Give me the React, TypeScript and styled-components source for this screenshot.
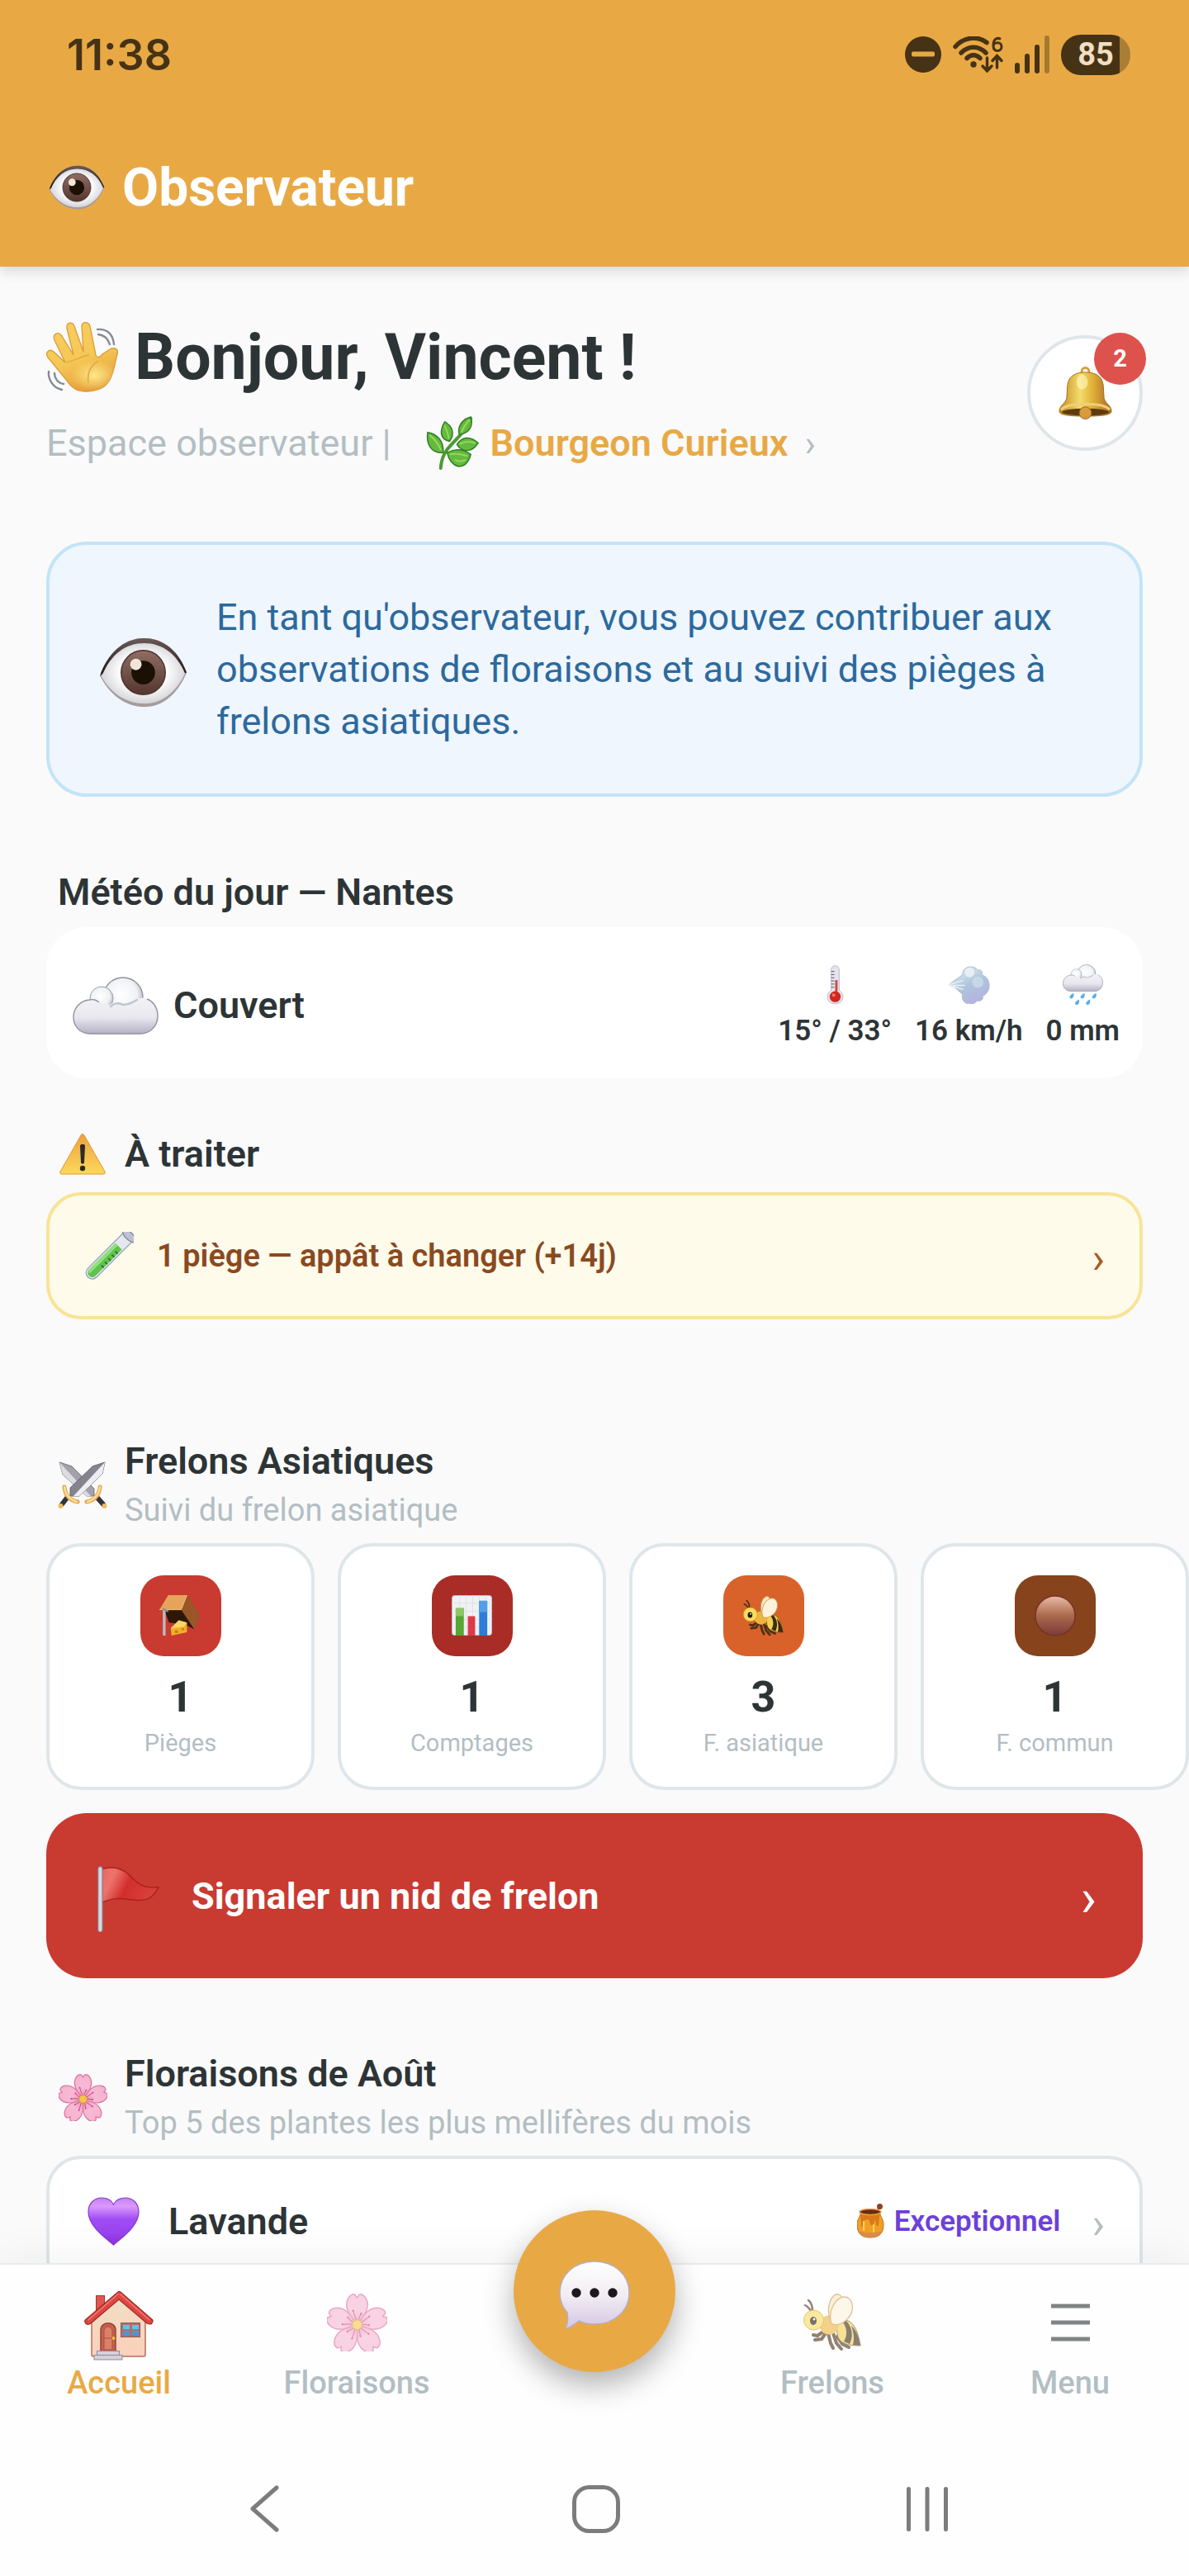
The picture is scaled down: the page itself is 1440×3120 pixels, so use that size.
import type { ReactNode } from 'react';
import styled, { ThemeProvider, createGlobalStyle } from 'styled-components';

const theme = {
  colors: {
    brand: '#e8a945',
    bg: '#fafafa',
    surface: '#ffffff',
    text: '#2d3436',
    muted: '#b2bec3',
    border: '#dfe6e9',
    status: '#463214',
    infoBg: '#eff6fe',
    infoBorder: '#c3e4f7',
    infoText: '#2c699d',
    warnBg: '#fefbeb',
    warnBorder: '#f7e496',
    warnText: '#8a4a1f',
    warnArrow: '#a95c26',
    danger: '#c93a31',
    badge: '#de524d',
    top: '#6d40d9',
    system: '#7c7c7c',
  },
  font: {
    xs: '29px',
    sm: '35px',
    md: '38px',
    base: '45px',
    stat: '52px',
    title: '64px',
    hero: '77px',
  },
  radius: { md: '28px', lg: '42px', xl: '49px' },
};

type AppTheme = typeof theme;
type Size = keyof AppTheme['font'];
type Color = keyof AppTheme['colors'];

declare module 'styled-components' {
  export interface DefaultTheme extends AppTheme {}
}

const GlobalStyle = createGlobalStyle`
  *, *::before, *::after {
    box-sizing: border-box;
  }

  body {
    margin: 0;
    background: ${({ theme }) => theme.colors.bg};
    color: ${({ theme }) => theme.colors.text};
    font-family: Roboto, sans-serif;
  }

  h1, h2, h3, p {
    margin: 0;
  }

  a {
    color: inherit;
    text-decoration: none;
  }

  button {
    border: none;
    background: none;
    padding: 0;
    font: inherit;
    color: inherit;
    text-align: left;
    cursor: pointer;
  }
`;

/* ---------- drawings ---------- */

type ArtProps = { width: number };

function Eye({ width }: ArtProps) {
  return (
    <svg width={width} viewBox="0 0 108 86" aria-hidden="true">
      <defs>
        <radialGradient id="eye-white" cx="50%" cy="48%" r="55%">
          <stop offset="0.5" stopColor="#ffffff" />
          <stop offset="1" stopColor="#cfcdd3" />
        </radialGradient>
        <linearGradient id="eye-iris" x1="0" y1="0" x2="0" y2="1">
          <stop offset="0" stopColor="#8f6d65" />
          <stop offset="1" stopColor="#54362f" />
        </linearGradient>
        <linearGradient id="eye-lid" x1="0" y1="0" x2="0" y2="1">
          <stop offset="0" stopColor="#6a5b59" />
          <stop offset="1" stopColor="#1d1210" />
        </linearGradient>
      </defs>
      <path d="M1 47C10 20 30 1 55 1s43 17 52 42c-8 20-25 42-51 42S12 68 1 47z" fill="#a39d9e" />
      <path d="M1 47C10 20 30 1 55 1s43 17 52 42l-4 2H3z" fill="url(#eye-lid)" />
      <path d="M3 48C14 20 33 7 55 7s40 13 50 37c-9 20-26 37-49 37S15 69 3 48z" fill="url(#eye-white)" />
      <circle cx="54" cy="43" r="27" fill="url(#eye-iris)" />
      <circle cx="54" cy="43" r="27" fill="none" stroke="#4d322c" strokeWidth="1.5" />
      <circle cx="54" cy="43" r="14.5" fill="#1b1005" />
      <circle cx="45" cy="33" r="7" fill="#efe5d8" />
    </svg>
  );
}

function Wave({ width }: ArtProps) {
  return (
    <svg width={width} viewBox="0 0 88 86" aria-hidden="true">
      <defs>
        <linearGradient id="wave-skin" x1="0.3" y1="0" x2="0.7" y2="1">
          <stop offset="0" stopColor="#f8cd60" />
          <stop offset="0.5" stopColor="#f5c856" />
          <stop offset="1" stopColor="#e59a35" />
        </linearGradient>
        <radialGradient id="wave-palm" cx="62%" cy="60%" r="38%">
          <stop offset="0" stopColor="#fde88a" />
          <stop offset="1" stopColor="#fde88a" stopOpacity="0" />
        </radialGradient>
      </defs>
      <path
        d="M46 84c-9 0-16-5-21-13L2 43c-4-7 2-11 7-7l14 13L10 22c-3-8 5-11 9-5l14 23L25 8c-1-8 7-9 9-3l11 31L43 6c0-7 8-7 10-1l7 35c2 4 5 3 8-1l9-6c6-3 11 0 9 6l-4 17c-3 12-7 21-17 25-6 2-12 4-19 3z"
        fill="url(#wave-skin)"
        stroke="#dc9a3a"
        strokeWidth="1.3"
      />
      <path
        d="M46 84c-9 0-16-5-21-13L12 55l20-16 28 2 6 3 20-9-4 21c-3 12-7 21-17 25-6 2-12 4-19 3z"
        fill="url(#wave-palm)"
      />
      <path d="M24 49c10-2 20-8 28-9M51 74c-2-14 4-22 12-27" fill="none" stroke="#e6ac46" strokeWidth="1.8" />
      <g fill="none" stroke="#858b93" strokeWidth="2.4" strokeLinecap="round">
        <path d="M62 9c12-1 19 6 20 18M63 15c8 1 12 6 14 12M3 60c-1 9 5 20 16 22M10 62c0 6 4 12 11 13" />
      </g>
    </svg>
  );
}

function Herb({ width }: ArtProps) {
  return (
    <svg width={width} viewBox="0 0 66 66" aria-hidden="true">
      <path d="M18 64c1-14 6-22 14-30S48 18 55 3" fill="none" stroke="#4b9a32" strokeWidth="4" strokeLinecap="round" />
      <g fill="#64ba3e" stroke="#2f7d24" strokeWidth="1.5">
        <path d="M21 45C6 46 0 34 2 20c12 2 20 11 19 25z" />
        <path d="M29 31c-13-3-12-14-6-24 9 5 13 14 6 24z" />
        <path d="M41 23c-3-10 3-19 14-22 3 10 0 19-14 22z" />
        <path d="M38 35c6-10 16-11 26-2-7 11-19 13-26 2z" />
        <path d="M26 45c9-5 19-5 29 2-3 11-9 15-15 15-8-2-12-8-14-17z" />
      </g>
      <g fill="none" stroke="#9ad660" strokeWidth="2" strokeLinecap="round">
        <path d="M18 41C15 34 10 28 5 24M28 27c-1-6-3-11-5-15M44 19c2-5 5-10 9-14M42 34c6-3 12-3 18-1M30 47c7-1 14 0 20 2M36 54c4 2 8 2 12 0" />
      </g>
    </svg>
  );
}

function Bell({ width }: ArtProps) {
  return (
    <svg width={width} viewBox="0 0 66 65" aria-hidden="true">
      <defs>
        <linearGradient id="bell-body" x1="0" y1="0" x2="1" y2="0">
          <stop offset="0" stopColor="#c48a22" />
          <stop offset="0.4" stopColor="#f3dd6b" />
          <stop offset="0.65" stopColor="#e0ae36" />
          <stop offset="1" stopColor="#a8662a" />
        </linearGradient>
      </defs>
      <circle cx="33" cy="6" r="4.5" fill="none" stroke="#d0a13c" strokeWidth="3" />
      <path
        d="M10 39l1-16C12 11 22 7 33 7s21 4 22 16l1 16c2 7 9 9 9 16 0 5-14 6-32 6S1 60 1 55c0-7 7-9 9-16z"
        fill="url(#bell-body)"
        stroke="#a56d1d"
        strokeWidth="1"
      />
      <ellipse cx="33" cy="56" rx="29" ry="4.5" fill="#5d3a10" />
      <path d="M3 53c5-5 16-7 30-7s25 2 30 7" fill="none" stroke="#f0cf78" strokeWidth="3" />
      <circle cx="33" cy="57" r="7.5" fill="#d89c3c" stroke="#9c6118" strokeWidth="1" />
      <ellipse cx="29" cy="19" rx="7" ry="9" fill="#fff7c4" opacity="0.6" />
    </svg>
  );
}

const CloudShape = () => (
  <>
    <defs>
      <radialGradient id="puff-fill" cx="45%" cy="42%" r="58%">
        <stop offset="0" stopColor="#ffffff" />
        <stop offset="0.7" stopColor="#f0f1f4" />
        <stop offset="1" stopColor="#b3b8c3" />
      </radialGradient>
      <linearGradient id="cloud-base" x1="0" y1="0" x2="0" y2="1">
        <stop offset="0" stopColor="#f3f3f6" />
        <stop offset="0.55" stopColor="#e8e7ee" />
        <stop offset="1" stopColor="#b5b1c4" />
      </linearGradient>
    </defs>
    <circle cx="61" cy="25" r="24" fill="url(#puff-fill)" stroke="#8e939f" strokeWidth="1.4" />
    <circle cx="35" cy="26" r="14" fill="url(#puff-fill)" stroke="#9ba0ab" strokeWidth="1" />
    <path
      d="M21 69C9 69 1 60 1 49s8-20 19-21c6-1 8 0 12 3l13 3c5-4 11-4 16-1 8 0 13-4 18-6 4-2 8-2 11 0 8 3 13 11 13 20 0 13-9 22-21 22z"
      fill="url(#cloud-base)"
    />
    <path d="M32 31c-4-3-6-4-12-3C9 29 1 38 1 49s8 20 20 20h61c12 0 21-9 21-22 0-9-5-17-13-20" fill="none" stroke="#8e939f" strokeWidth="1.4" />
    <path d="M46 36c4-4 10-5 15-2 7 0 12-3 17-6" fill="none" stroke="#bdc5d0" strokeWidth="2.5" strokeLinecap="round" />
  </>
);

function Cloud({ width }: ArtProps) {
  return (
    <svg width={width} viewBox="0 0 104 70" aria-hidden="true">
      <CloudShape />
    </svg>
  );
}

function Rain({ width }: ArtProps) {
  return (
    <svg width={width} viewBox="0 0 104 106" aria-hidden="true">
      <CloudShape />
      <g fill="#5aaeea">
        <path d="M28 74c2 8-1 14-6 14s-8-7 6-14z" />
        <path d="M56 74c2 8-1 14-6 14s-8-7 6-14z" />
        <path d="M86 74c2 8-1 14-6 14s-8-7 6-14z" />
        <path d="M42 90c2 8-1 14-6 14s-8-7 6-14z" />
        <path d="M70 90c2 8-1 14-6 14s-8-7 6-14z" />
      </g>
    </svg>
  );
}

function Thermometer({ width }: ArtProps) {
  return (
    <svg width={width} viewBox="0 0 22 50" aria-hidden="true">
      <path d="M6 6c0-7 10-7 10 0v26c8 5 6 17-5 17S-2 37 6 32z" fill="#e6e4ee" stroke="#b7b3c8" strokeWidth="1" />
      <path d="M11 19h3v18h-3z" fill="#d2453c" />
      <circle cx="11" cy="40" r="7" fill="#d0281f" />
      <circle cx="9" cy="38" r="2" fill="#ee7c72" />
      <path d="M6 8h4M6 12h4M6 16h4M6 20h4M6 24h4M6 28h4" stroke="#555" strokeWidth="1" />
    </svg>
  );
}

function Wind({ width }: ArtProps) {
  return (
    <svg width={width} viewBox="0 0 52 47" aria-hidden="true">
      <defs>
        <linearGradient id="wind-fill" x1="0.2" y1="0" x2="0.7" y2="1">
          <stop offset="0" stopColor="#e3edf5" />
          <stop offset="0.5" stopColor="#aec6db" />
          <stop offset="1" stopColor="#b7b0e2" />
        </linearGradient>
      </defs>
      <path
        d="M1 23l17-12C18 4 23 1 28 1s7 2 9 4c4-1 6 2 5 6 6 2 9 7 9 13s-3 11-8 13c1 4-2 7-7 6-3 4-8 5-13 3s-6-7-5-11L8 26z"
        fill="url(#wind-fill)"
        stroke="#a9bccd"
        strokeWidth="1"
      />
      <path d="M1 23l18-5M3 24h18M19 29L6 25" stroke="#e9f1f7" strokeWidth="1.5" />
      <circle cx="27" cy="8" r="6" fill="#f4f8fb" opacity="0.7" />
      <circle cx="37" cy="20" r="7" fill="#cfdfec" opacity="0.7" />
    </svg>
  );
}

function Warning({ width }: ArtProps) {
  return (
    <svg width={width} viewBox="0 0 56 50" aria-hidden="true">
      <defs>
        <linearGradient id="warning-fill" x1="0" y1="0" x2="0" y2="1">
          <stop offset="0" stopColor="#eda13f" />
          <stop offset="1" stopColor="#fbd95a" />
        </linearGradient>
      </defs>
      <path d="M26 2c1-2 3-2 4 0l25 44c1 2 0 3-2 3H3c-2 0-3-1-2-3z" fill="url(#warning-fill)" stroke="#e0953a" strokeWidth="1" />
      <path d="M25 15c0-3 6-3 6 0l-1 20c0 2-4 2-4 0z" fill="#2b2a26" />
      <circle cx="28" cy="42" r="3.2" fill="#2b2a26" />
    </svg>
  );
}

function TestTube({ width }: ArtProps) {
  return (
    <svg width={width} viewBox="0 0 60 59" aria-hidden="true">
      <g transform="rotate(45 30 30)">
        <path d="M22-5h15v63c0 10-15 10-15 0z" fill="#e4e7ee" stroke="#9aa1b2" strokeWidth="1.3" />
        <path d="M24 13h11v45c0 7-11 7-11 0z" fill="#5fc24c" />
        <path d="M24 13h4v48c-3 0-4-2-4-4z" fill="#8ee27b" />
        <path d="M31 20h4M31 26h4M31 32h4M31 38h4M31 44h4" stroke="#246b2b" strokeWidth="1.6" />
        <ellipse cx="29.5" cy="-5" rx="10" ry="4.5" fill="#bfc2d3" stroke="#8488a0" strokeWidth="1.4" />
      </g>
    </svg>
  );
}

function Swords({ width }: ArtProps) {
  return (
    <svg width={width} viewBox="0 0 60 58" aria-hidden="true">
      <path d="M2 1l15 5 27 27v9h-9L6 16z" fill="#a3a1aa" stroke="#77757f" strokeWidth="1" />
      <path d="M2 1l38 41h-5L6 16z" fill="#dcdbe1" />
      <path d="M57 1L42 6 15 32v10h11l28-27z" fill="#85838e" stroke="#6b6974" strokeWidth="1" />
      <path d="M57 1L19 42h7l28-27z" fill="#efedf2" />
      <g strokeLinecap="round" fill="none">
        <path d="M12 43l-7 9M47 43l8 9" stroke="#35323d" strokeWidth="6" />
        <path d="M8 31c1 10 6 16 16 18M51 31c-1 10-6 16-16 18" stroke="#e3a548" strokeWidth="5" />
        <path d="M8 31c1 9 6 15 15 18M51 31c-1 9-6 15-15 18" stroke="#fcdc98" strokeWidth="2.4" />
      </g>
      <circle cx="3.5" cy="54" r="3" fill="#f0bb5a" />
      <circle cx="56.5" cy="54" r="3" fill="#f0bb5a" />
    </svg>
  );
}

function Trap({ width }: ArtProps) {
  return (
    <svg width={width} viewBox="0 0 52 51" aria-hidden="true">
      <path d="M34 0l17 25-8 17L27 18z" fill="#9a5626" />
      <path d="M6 18h21l16 24-12-6-19-2z" fill="#2d1706" />
      <path d="M0 18L11 0h23l-7 18z" fill="#e6a35a" />
      <path d="M0 18h27l7-18" fill="none" stroke="#f2c07f" strokeWidth="1" />
      <path d="M14 41l10-10 10 3v12l-19 4z" fill="#f0ad2c" />
      <path d="M14 41l10-10 10 3-4 5z" fill="#fad666" />
      <circle cx="21" cy="45" r="2" fill="#c97c15" />
      <circle cx="29" cy="42" r="1.5" fill="#c97c15" />
      <path d="M6 17v33" stroke="#b8bac4" strokeWidth="3.5" />
      <path d="M4 17l7 3" stroke="#8b8d96" strokeWidth="2.5" />
    </svg>
  );
}

function Chart({ width }: ArtProps) {
  return (
    <svg width={width} viewBox="0 0 50 51" aria-hidden="true">
      <rect x="0.5" y="0.5" width="49" height="49" rx="3" fill="#f0f1f4" stroke="#b9bcc6" />
      <path d="M0 10h50M0 20h50M0 30h50M0 40h50M10 0v50M18 0v50M26 0v50M34 0v50M42 0v50" stroke="#dfe1e7" />
      <rect x="5" y="16" width="10" height="34" fill="#55a632" />
      <rect x="5" y="16" width="10" height="10" fill="#8cc765" />
      <rect x="20" y="26" width="9" height="24" fill="#e03a4a" />
      <rect x="34" y="7" width="10" height="43" fill="#2f7bd8" />
      <rect x="34" y="7" width="10" height="14" fill="#4fa0e8" />
    </svg>
  );
}

function Bee({ width }: ArtProps) {
  return (
    <svg width={width} viewBox="0 0 70 70" aria-hidden="true">
      <g fill="none" stroke="#4b3114" strokeLinecap="round">
        <path d="M11 21C11 15 10 11 6 8M9 22c-1-4-3-6-7-8" strokeWidth="2.5" />
        <path d="M24 46l-7 5-5-1M27 48l-5 7-8 1M30 48l3 12 3 6M36 48l4 12 6 7M41 52l6 9 8 4" strokeWidth="4" />
      </g>
      <path d="M40 33c16-5 25 4 29 30-12 0-26-1-28-14z" fill="#f3cf4e" stroke="#6a4a15" strokeWidth="1" />
      <path d="M46 32c7 9 8 17 3 26l7 3c5-10 3-20-4-28zM58 39c3 8 4 15 2 23l9 1c-2-11-5-19-11-24z" fill="#3b2a14" />
      <circle cx="31" cy="38" r="11.5" fill="#eeb43c" />
      <circle cx="12.5" cy="32" r="12" fill="#f8dc5e" stroke="#cf9c2d" strokeWidth="1" />
      <ellipse cx="12" cy="33" rx="4" ry="5" fill="#1e1409" />
      <circle cx="13" cy="31" r="1.4" fill="#fff" />
      <path d="M32 31C27 14 35-1 43 1c7 3 5 20-7 31z" fill="#f8e6c2" stroke="#c69a54" strokeWidth="1.3" />
      <path d="M34 36c-5-14 5-32 16-32 10 0 14 17 2 28-6 5-13 7-18 4z" fill="#fdf3dd" stroke="#c69a54" strokeWidth="1.3" />
    </svg>
  );
}

function BrownDisc({ width }: ArtProps) {
  return (
    <svg width={width} viewBox="0 0 50 50" aria-hidden="true">
      <defs>
        <linearGradient id="disc-fill" x1="0" y1="0" x2="0" y2="1">
          <stop offset="0" stopColor="#ebbba6" />
          <stop offset="0.5" stopColor="#a9694d" />
          <stop offset="1" stopColor="#7b3a38" />
        </linearGradient>
      </defs>
      <circle cx="25" cy="25" r="24" fill="url(#disc-fill)" stroke="#7a3226" strokeWidth="1.5" />
    </svg>
  );
}

function Flag({ width }: ArtProps) {
  return (
    <svg width={width} viewBox="0 0 77 82" aria-hidden="true">
      <defs>
        <linearGradient id="flag-fill" x1="0" y1="0" x2="1" y2="0.3">
          <stop offset="0" stopColor="#e8665f" />
          <stop offset="0.25" stopColor="#ec746c" />
          <stop offset="0.55" stopColor="#d22e2c" />
          <stop offset="1" stopColor="#d9403c" />
        </linearGradient>
      </defs>
      <path d="M5 4c13-4 25-1 34 7 8 8 14 17 36 15-5 10-11 16-23 16-17 0-26-6-47 3z" fill="url(#flag-fill)" stroke="#ab2221" strokeWidth="1.5" />
      <rect x="0.7" y="0.7" width="5.5" height="80.6" rx="2.7" fill="#d8d6de" stroke="#85747f" strokeWidth="1.2" />
    </svg>
  );
}

const PETALS = [0, 72, 144, 216, 288];

function Blossom({ width }: ArtProps) {
  return (
    <svg width={width} viewBox="-30 -31 60 58" aria-hidden="true">
      <defs>
        <radialGradient id="petal-fill" cx="0" cy="0" r="30" gradientUnits="userSpaceOnUse">
          <stop offset="0" stopColor="#ee8db7" />
          <stop offset="0.5" stopColor="#f7b9d5" />
          <stop offset="1" stopColor="#f5b3cf" />
        </radialGradient>
      </defs>
      {PETALS.map((angle) => (
        <g key={angle} transform={`rotate(${angle})`}>
          <path
            d="M0-1C-8-9-13-18-9-26c2-4 5-5 7-4l2 3 2-3c2-1 5 0 7 4 4 8-1 17-9 25z"
            fill="url(#petal-fill)"
            stroke="#d9709f"
            strokeWidth="1.2"
          />
          <path d="M-1-5l-3-9M1-5l3-6" stroke="#c2467c" strokeWidth="0.9" />
          <circle cx="-4" cy="-14" r="1" fill="#c2467c" />
          <circle cx="4" cy="-11" r="1" fill="#c2467c" />
        </g>
      ))}
      <circle r="5" fill="#f3c64c" stroke="#d78f3f" strokeWidth="1" />
    </svg>
  );
}

function Heart({ width }: ArtProps) {
  return (
    <svg width={width} viewBox="0 0 63 59" aria-hidden="true">
      <defs>
        <linearGradient id="heart-fill" x1="0" y1="0" x2="0" y2="1">
          <stop offset="0" stopColor="#c182f4" />
          <stop offset="0.18" stopColor="#dc98fb" />
          <stop offset="0.45" stopColor="#a14df5" />
          <stop offset="0.75" stopColor="#9a43f0" />
          <stop offset="1" stopColor="#8f2fd6" />
        </linearGradient>
      </defs>
      <path
        d="M31.5 58C21 49 1 35 1 18 1 8 8 1 17 1c7 0 12 3 14.5 8C34 4 39 1 46 1c9 0 16 7 16 17 0 17-20 31-30.5 40z"
        fill="url(#heart-fill)"
        stroke="#8437cc"
        strokeWidth="1.2"
      />
    </svg>
  );
}

function Honey({ width }: ArtProps) {
  return (
    <svg width={width} viewBox="0 0 33 42" aria-hidden="true">
      <path d="M22 13l5-9" stroke="#8a4a24" strokeWidth="2" />
      <circle cx="27.5" cy="3.5" r="3.5" fill="#8f4227" />
      <path d="M4 11h24c-1 4 4 7 4 14 0 11-5 16-16 16S0 36 0 25c0-7 5-10 4-14z" fill="#f0a125" stroke="#c06d18" strokeWidth="1" />
      <path d="M1 33c8 3 22 3 30 0-2 5-7 8-15 8S3 38 1 33z" fill="#d98d4a" />
      <path d="M4 12h24l-1 4-1 10c-1 2-3 1-3-1l-1-6-2 5c-1 3-4 3-4 0l-2-5-5 1-1 7c-1 2-3 1-3-1z" fill="#d9791a" />
      <ellipse cx="16" cy="10" rx="13" ry="3.5" fill="#6c2c12" stroke="#e9a24a" strokeWidth="1.5" />
      <path d="M8 22v10M20 26v8" stroke="#fbd25c" strokeWidth="2" strokeLinecap="round" />
    </svg>
  );
}

function House({ width }: ArtProps) {
  return (
    <svg width={width} viewBox="0 0 84 84" aria-hidden="true">
      <defs>
        <linearGradient id="house-wall" x1="0" y1="0" x2="0" y2="1">
          <stop offset="0" stopColor="#efdfc4" />
          <stop offset="1" stopColor="#fbd0bb" />
        </linearGradient>
      </defs>
      <rect x="14.5" y="5.5" width="10" height="24" fill="#df5651" stroke="#a9332f" />
      <path d="M9 33L42 5l32 28v44q0 2-2 2H11q-2 0-2-2z" fill="url(#house-wall)" stroke="#b86f55" strokeWidth="1.5" />
      <path d="M41.5 0.5q1.5-0.5 3 1L83 35q0.5 3-2 5-3 0-5-1L42 10 8 39q-3 2-5 1-3-2-2-5z" fill="#dc4743" stroke="#9f2723" strokeWidth="1.2" />
      <path d="M41.5 3L5 35M43 3l36 32" stroke="#ef7b73" strokeWidth="1.5" />
      <path d="M20 74V47c0-11 18-11 18 0v27z" fill="#c8604f" stroke="#8f4436" strokeWidth="1.5" />
      <path d="M24 71V49c0-8 10-8 10 0v22zM24 57h10" fill="#dc8069" stroke="#ab4f3e" strokeWidth="1" />
      <circle cx="35.5" cy="57" r="2" fill="#f7bd35" />
      <rect x="44.5" y="38.5" width="23" height="17" fill="#b36f6a" stroke="#8b5b58" />
      <path d="M47 41h8v5h-8zM58 41h8v5h-8z" fill="#5cc5ea" />
      <path d="M47 48h8v5h-8zM58 48h8v5h-8z" fill="#4a96d8" />
      <rect x="15.5" y="72.5" width="27" height="5" fill="#d6d0dc" stroke="#8f8a99" />
      <rect x="12" y="77.5" width="34" height="5.5" fill="#d6d0dc" stroke="#8f8a99" />
    </svg>
  );
}

function Chat({ width }: ArtProps) {
  return (
    <svg width={width} viewBox="0 0 86 83" aria-hidden="true">
      <defs>
        <linearGradient id="chat-fill" x1="0" y1="0" x2="0" y2="1">
          <stop offset="0" stopColor="#ffffff" />
          <stop offset="0.5" stopColor="#f1eef3" />
          <stop offset="1" stopColor="#d6c6e6" />
        </linearGradient>
      </defs>
      <path
        d="M43 1c24 0 42 16 42 38S67 77 43 77c-7 0-13-1-19-4-4 3-9 7-14 9-2 0-2-2-1-3 2-5 2-10 1-16C4 56 1 48 1 39 1 17 19 1 43 1z"
        fill="url(#chat-fill)"
        stroke="#b9adbf"
        strokeWidth="1.5"
      />
      <circle cx="21" cy="39" r="5.7" fill="#1f1720" />
      <circle cx="43" cy="39" r="5.7" fill="#1f1720" />
      <circle cx="65" cy="39" r="5.7" fill="#1f1720" />
    </svg>
  );
}

function Burger({ width }: ArtProps) {
  return (
    <svg width={width} viewBox="0 0 47 46" aria-hidden="true">
      <path d="M0 3h47M0 23h47M0 43h47" stroke="#2d3436" strokeWidth="5" />
    </svg>
  );
}

function Dnd() {
  return (
    <svg width="44" viewBox="0 0 44 44" aria-hidden="true">
      <circle cx="22" cy="22" r="22" fill={theme.colors.status} />
      <rect x="8" y="18.5" width="28" height="6" rx="2" fill={theme.colors.brand} />
    </svg>
  );
}

function Wifi() {
  return (
    <svg width="61" viewBox="0 0 61 44" aria-hidden="true">
      <g fill="none" stroke={theme.colors.status} strokeLinecap="round">
        <path d="M3 12.500C14 0 31-0.500 41 7.500M10 20c9-9 21-9 30 0M17 26.500c5-5 11-5 16 0" strokeWidth="5.5" />
        <path d="M41.500 26v15M36 36l5.500 6 5.500-6M53.500 38V24M48 29.500l5.500-6 5.500 6" strokeWidth="3.4" />
      </g>
      <circle cx="25" cy="34" r="3.7" fill={theme.colors.status} />
      <path
        d="M58 3.500C53 0.500 49 4 49 11c0 4.500 2 6.500 5 6.500s5-2 5-5-2-4.800-4.700-4.800S49 9.500 49 12"
        fill="none"
        stroke={theme.colors.status}
        strokeWidth="3"
      />
    </svg>
  );
}

function Signal() {
  return (
    <svg width="42" viewBox="0 0 42 46" aria-hidden="true">
      <g stroke={theme.colors.status} strokeWidth="6" strokeLinecap="round">
        <path d="M3 36v7M15 25v18M27 14v29" />
        <path d="M39 3v40" opacity="0.4" />
      </g>
    </svg>
  );
}

function BackArrow() {
  return (
    <svg width="36" viewBox="0 0 36 57" aria-hidden="true">
      <path d="M32 3L3 28.5 32 54" fill="none" stroke={theme.colors.system} strokeWidth="5" strokeLinecap="round" strokeLinejoin="round" />
    </svg>
  );
}

function HomeSquare() {
  return (
    <svg width="58" viewBox="0 0 58 58" aria-hidden="true">
      <rect x="2.5" y="2.5" width="53" height="53" rx="18" fill="none" stroke={theme.colors.system} strokeWidth="5" />
    </svg>
  );
}

function Recents() {
  return (
    <svg width="50" viewBox="0 0 50 54" aria-hidden="true">
      <path d="M2.5 2.5v49M25 2.5v49M47.5 2.5v49" stroke={theme.colors.system} strokeWidth="5" strokeLinecap="round" />
    </svg>
  );
}

/* ---------- layout ---------- */

const Shell = styled.div`
  display: flex;
  flex-direction: column;
  height: 100vh;
  overflow: hidden;
`;

const TopBar = styled.header`
  position: relative;
  z-index: 2;
  flex: none;
  background: ${({ theme }) => theme.colors.brand};
  box-shadow: 0 4px 16px rgba(0, 0, 0, 0.16);
`;

const StatusBar = styled.div`
  display: flex;
  align-items: center;
  justify-content: space-between;
  height: 132px;
  padding: 0 71px 0 81px;
  color: ${({ theme }) => theme.colors.status};
`;

const Clock = styled.time`
  font-family: Inter, sans-serif;
  font-size: ${({ theme }) => theme.font.stat};
  font-weight: 600;
`;

const StatusIcons = styled.div`
  display: flex;
  align-items: center;
  gap: 14px;
`;

const Battery = styled.span`
  width: 84px;
  border-radius: 24px;
  background: linear-gradient(
    90deg,
    ${({ theme }) => theme.colors.status} 85%,
    #aa7e35 85%
  );
  color: #f0dfc2;
  font-size: ${({ theme }) => theme.font.md};
  font-weight: 700;
  line-height: 49px;
  text-align: center;
`;

const TitleRow = styled.div`
  display: flex;
  align-items: center;
  gap: 18px;
  height: 191px;
  padding: 0 56px;
`;

const PageTitle = styled.h1`
  color: #ffffff;
  font-size: ${({ theme }) => theme.font.title};
  font-weight: 700;
`;

const Content = styled.main`
  flex: 1;
  min-height: 0;
  overflow: hidden;
  padding: 56px 56px 0;
`;

const IconBox = styled.span<{ $size: number; $drop?: boolean }>`
  display: flex;
  flex: none;
  align-items: center;
  justify-content: center;
  width: ${({ $size }) => $size}px;
  padding-top: ${({ $drop }) => ($drop ? 8 : 0)}px;

  svg {
    display: block;
    flex: none;
  }
`;

const Text = styled.span<{
  $size: Size;
  $weight?: number;
  $color?: Color;
  $line?: number;
  $grow?: boolean;
}>`
  font-size: ${({ theme, $size }) => theme.font[$size]};
  font-weight: ${({ $weight = 400 }) => $weight};
  line-height: ${({ $line }) => ($line ? `${$line}px` : 'normal')};
  color: ${({ theme, $color = 'text' }) => theme.colors[$color]};
  flex: ${({ $grow }) => ($grow ? 1 : 'none')};
`;

const Arrow = styled.span<{ $color: Color; $size?: Size }>`
  padding-top: 8px;
  color: ${({ theme, $color }) => theme.colors[$color]};
  font-size: ${({ theme, $size = 'stat' }) => theme.font[$size]};
  line-height: 52px;
`;

const Greeting = styled.div`
  display: flex;
  align-items: center;
  justify-content: space-between;
`;

const Hello = styled.h2`
  display: flex;
  align-items: center;
  gap: 19px;
  margin-bottom: 14px;
  font-size: ${({ theme }) => theme.font.hero};
  font-weight: 700;
  line-height: 108px;
`;

const RoleRow = styled.div`
  display: flex;
  align-items: center;
  gap: 42px;
  height: 71px;
`;

const LevelLink = styled.a`
  display: flex;
  align-items: center;
  gap: 12px;

  ${Arrow} {
    margin-left: 8px;
    padding-top: 0;
  }
`;

const BellButton = styled.button`
  position: relative;
  display: flex;
  align-items: center;
  justify-content: center;
  width: 140px;
  height: 140px;
  border: 4px solid ${({ theme }) => theme.colors.border};
  border-radius: 50%;
  background: ${({ theme }) => theme.colors.surface};
`;

const Badge = styled.span`
  position: absolute;
  top: -7px;
  right: -8px;
  width: 63px;
  border-radius: 50%;
  background: ${({ theme }) => theme.colors.badge};
  color: #ffffff;
  font-size: ${({ theme }) => theme.font.xs};
  font-weight: 700;
  line-height: 63px;
  text-align: center;
`;

const InfoCard = styled.section`
  display: flex;
  align-items: center;
  gap: 32px;
  margin-top: 84px;
  padding: 56px;
  border: 4px solid ${({ theme }) => theme.colors.infoBorder};
  border-radius: ${({ theme }) => theme.radius.xl};
  background: ${({ theme }) => theme.colors.infoBg};
`;

const InfoText = styled.p`
  flex: 1;
  color: ${({ theme }) => theme.colors.infoText};
  font-size: ${({ theme }) => theme.font.base};
  line-height: 63px;
`;

const Section = styled.section<{ $top: number }>`
  margin-top: ${({ $top }) => $top}px;
`;

const HeadingRow = styled.div<{ $icon: boolean }>`
  display: flex;
  align-items: center;
  gap: 21px;
  min-height: ${({ $icon }) => ($icon ? 64 : 56)}px;
  margin-bottom: 14px;
  padding: 0 14px;
`;

const HeadingTitle = styled.h3`
  font-size: ${({ theme }) => theme.font.base};
  font-weight: 600;
  line-height: 56px;
`;

const HeadingNote = styled.p`
  margin-top: 5px;
  color: ${({ theme }) => theme.colors.muted};
  font-size: ${({ theme }) => theme.font.md};
  line-height: 52px;
`;

type HeadingProps = { title: string; note?: string; icon?: ReactNode };

function Heading({ title, note, icon }: HeadingProps) {
  return (
    <HeadingRow $icon={Boolean(icon)}>
      {icon && <IconBox $size={60}>{icon}</IconBox>}
      <div>
        <HeadingTitle>{title}</HeadingTitle>
        {note && <HeadingNote>{note}</HeadingNote>}
      </div>
    </HeadingRow>
  );
}

const WeatherCard = styled.div`
  display: flex;
  align-items: center;
  gap: 14px;
  padding: 42px 28px 36px;
  border-radius: ${({ theme }) => theme.radius.xl};
  background: ${({ theme }) => theme.colors.surface};
`;

const Metrics = styled.div`
  display: flex;
  gap: 28px;
`;

const Metric = styled.div`
  display: flex;
  flex-direction: column;
  align-items: center;
  gap: 7px;

  ${IconBox} {
    height: 56px;
  }
`;

const AlertRow = styled.a`
  display: flex;
  align-items: center;
  gap: 28px;
  padding: 42px;
  border: 4px solid ${({ theme }) => theme.colors.warnBorder};
  border-radius: ${({ theme }) => theme.radius.lg};
  background: ${({ theme }) => theme.colors.warnBg};
`;

const StatRow = styled.div`
  display: flex;
  gap: 28px;
  margin: 0 -56px 28px 0;
  overflow: hidden;
`;

const StatCard = styled.a`
  display: flex;
  flex: 1;
  flex-direction: column;
  align-items: center;
  padding: 35px 14px;
  border: 4px solid ${({ theme }) => theme.colors.border};
  border-radius: ${({ theme }) => theme.radius.lg};
  background: ${({ theme }) => theme.colors.surface};
`;

const StatIcon = styled.span<{ $bg: string }>`
  display: flex;
  align-items: center;
  justify-content: center;
  width: 98px;
  height: 98px;
  margin-bottom: 19px;
  border-radius: ${({ theme }) => theme.radius.md};
  background: ${({ $bg }) => $bg};
`;

const StatLabel = styled.span`
  margin-top: 6px;
  color: ${({ theme }) => theme.colors.muted};
  font-size: ${({ theme }) => theme.font.xs};
  line-height: 36px;
`;

const ReportButton = styled.button`
  display: flex;
  align-items: center;
  gap: 32px;
  width: 100%;
  height: 200px;
  padding: 0 56px;
  border-radius: ${({ theme }) => theme.radius.xl};
  background: ${({ theme }) => theme.colors.danger};
`;

const PlantList = styled.div`
  border: 4px solid ${({ theme }) => theme.colors.border};
  border-radius: ${({ theme }) => theme.radius.lg};
  background: ${({ theme }) => theme.colors.surface};
`;

/* taller than the visible part: the list carries on under the tab bar */
const PlantRow = styled.a`
  display: flex;
  align-items: center;
  gap: 32px;
  min-height: 150px;
  margin-bottom: 42px;
  padding: 0 42px;
`;

const Rating = styled.span`
  display: flex;
  align-items: center;
  gap: 10px;
  margin-right: 6px;
`;

const Footer = styled.footer`
  position: relative;
  z-index: 2;
  flex: none;
  border-top: 2px solid #e9eced;
  background: #fefefe;
  box-shadow: 0 -8px 48px rgba(0, 0, 0, 0.05);
`;

const TabBar = styled.nav`
  display: grid;
  grid-template-columns: repeat(5, 1fr);
  height: 192px;
`;

const Tab = styled.a<{ $active?: boolean }>`
  display: flex;
  flex-direction: column;
  align-items: center;
  padding-top: 28px;
  color: ${({ theme, $active }) => ($active ? theme.colors.brand : theme.colors.muted)};
  font-size: ${({ theme }) => theme.font.md};
  font-weight: 500;
  line-height: 52px;

  ${IconBox} {
    height: 84px;
    margin-bottom: 5px;
    opacity: ${({ $active }) => ($active ? 1 : 0.6)};
  }
`;

const ChatButton = styled.button`
  display: flex;
  align-items: center;
  justify-content: center;
  justify-self: center;
  width: 196px;
  height: 196px;
  margin-top: -66px;
  padding-top: 8px;
  border-radius: 50%;
  background: ${({ theme }) => theme.colors.brand};
  box-shadow: 0 16px 36px rgba(0, 0, 0, 0.3);
`;

const SystemNav = styled.div`
  display: grid;
  grid-template-columns: repeat(3, 1fr);
  height: 185px;
  padding: 22px 116px 0 120px;
`;

const SystemButton = styled.button`
  display: flex;
  align-items: center;
  justify-content: center;
`;

const METRICS = [
  { icon: <Thermometer width={21} />, value: '15° / 33°' },
  { icon: <Wind width={51} />, value: '16 km/h' },
  { icon: <Rain width={49} />, value: '0 mm' },
];

const STATS = [
  { icon: <Trap width={51} />, bg: '#c93a31', value: 1, label: 'Pièges' },
  { icon: <Chart width={49} />, bg: '#a92d26', value: 1, label: 'Comptages' },
  { icon: <Bee width={49} />, bg: '#d9622b', value: 3, label: 'F. asiatique' },
  { icon: <BrownDisc width={50} />, bg: '#86431c', value: 1, label: 'F. commun' },
];

export default function App() {
  return (
    <ThemeProvider theme={theme}>
      <GlobalStyle />
      <Shell>
        <TopBar>
          <StatusBar>
            <Clock>11:38</Clock>
            <StatusIcons>
              <Dnd />
              <Wifi />
              <Signal />
              <Battery>85</Battery>
            </StatusIcons>
          </StatusBar>
          <TitleRow>
            <IconBox $size={74}>
              <Eye width={68} />
            </IconBox>
            <PageTitle>Observateur</PageTitle>
          </TitleRow>
        </TopBar>

        <Content>
          <Greeting>
            <div>
              <Hello>
                <IconBox $size={88}>
                  <Wave width={88} />
                </IconBox>
                Bonjour, Vincent !
              </Hello>
              <RoleRow>
                <Text $size="base" $color="muted">Espace observateur |</Text>
                <LevelLink href="#niveau">
                  <IconBox $size={66}>
                    <Herb width={65} />
                  </IconBox>
                  <Text $size="base" $weight={600} $color="brand">Bourgeon Curieux</Text>
                  <Arrow $color="muted" $size="base">›</Arrow>
                </LevelLink>
              </RoleRow>
            </div>
            <BellButton type="button" aria-label="Notifications">
              <Bell width={65} />
              <Badge>2</Badge>
            </BellButton>
          </Greeting>

          <InfoCard>
            <IconBox $size={114} $drop>
              <Eye width={107} />
            </IconBox>
            <InfoText>
              En tant qu'observateur, vous pouvez contribuer aux observations de
              floraisons et au suivi des pièges à frelons asiatiques.
            </InfoText>
          </InfoCard>

          <Section $top={88}>
            <Heading title="Météo du jour — Nantes" />
            <WeatherCard>
              <IconBox $size={112}>
                <Cloud width={104} />
              </IconBox>
              <Text $size="base" $weight={600} $grow>Couvert</Text>
              <Metrics>
                {METRICS.map((m) => (
                  <Metric key={m.value}>
                    <IconBox $size={56}>{m.icon}</IconBox>
                    <Text $size="sm" $weight={600} $line={42}>{m.value}</Text>
                  </Metric>
                ))}
              </Metrics>
            </WeatherCard>
          </Section>

          <Section $top={60}>
            <Heading title="À traiter" icon={<Warning width={56} />} />
            <AlertRow href="#pieges">
              <IconBox $size={60}>
                <TestTube width={60} />
              </IconBox>
              <Text $size="md" $weight={600} $color="warnText" $line={62} $grow>
                1 piège — appât à changer (+14j)
              </Text>
              <Arrow $color="warnArrow">›</Arrow>
            </AlertRow>
          </Section>

          <Section $top={144}>
            <Heading
              title="Frelons Asiatiques"
              note="Suivi du frelon asiatique"
              icon={<Swords width={60} />}
            />
            <StatRow>
              {STATS.map((s) => (
                <StatCard key={s.label} href="#frelons">
                  <StatIcon $bg={s.bg}>{s.icon}</StatIcon>
                  <Text $size="stat" $weight={700} $line={62}>{s.value}</Text>
                  <StatLabel>{s.label}</StatLabel>
                </StatCard>
              ))}
            </StatRow>
            <ReportButton type="button">
              <IconBox $size={88} $drop>
                <Flag width={76} />
              </IconBox>
              <Text $size="base" $weight={700} $color="surface" $grow>
                Signaler un nid de frelon
              </Text>
              <Arrow $color="surface" $size="title">›</Arrow>
            </ReportButton>
          </Section>

          <Section $top={88}>
            <Heading
              title="Floraisons de Août"
              note="Top 5 des plantes les plus mellifères du mois"
              icon={<Blossom width={59} />}
            />
            <PlantList>
              <PlantRow href="#lavande">
                <IconBox $size={70}>
                  <Heart width={63} />
                </IconBox>
                <Text $size="base" $weight={600} $grow>Lavande</Text>
                <Rating>
                  <IconBox $size={36}>
                    <Honey width={33} />
                  </IconBox>
                  <Text $size="sm" $weight={600} $color="top">Exceptionnel</Text>
                </Rating>
                <Arrow $color="muted">›</Arrow>
              </PlantRow>
            </PlantList>
          </Section>
        </Content>

        <Footer>
          <TabBar>
            <Tab href="#accueil" $active>
              <IconBox $size={88} $drop>
                <House width={84} />
              </IconBox>
              Accueil
            </Tab>
            <Tab href="#floraisons">
              <IconBox $size={88}>
                <Blossom width={73} />
              </IconBox>
              Floraisons
            </Tab>
            <ChatButton type="button" aria-label="Messages">
              <Chat width={86} />
            </ChatButton>
            <Tab href="#frelons">
              <IconBox $size={88}>
                <Bee width={70} />
              </IconBox>
              Frelons
            </Tab>
            <Tab href="#menu">
              <IconBox $size={88}>
                <Burger width={47} />
              </IconBox>
              Menu
            </Tab>
          </TabBar>
          <SystemNav>
            <SystemButton type="button" aria-label="Retour">
              <BackArrow />
            </SystemButton>
            <SystemButton type="button" aria-label="Écran d'accueil">
              <HomeSquare />
            </SystemButton>
            <SystemButton type="button" aria-label="Applications récentes">
              <Recents />
            </SystemButton>
          </SystemNav>
        </Footer>
      </Shell>
    </ThemeProvider>
  );
}
